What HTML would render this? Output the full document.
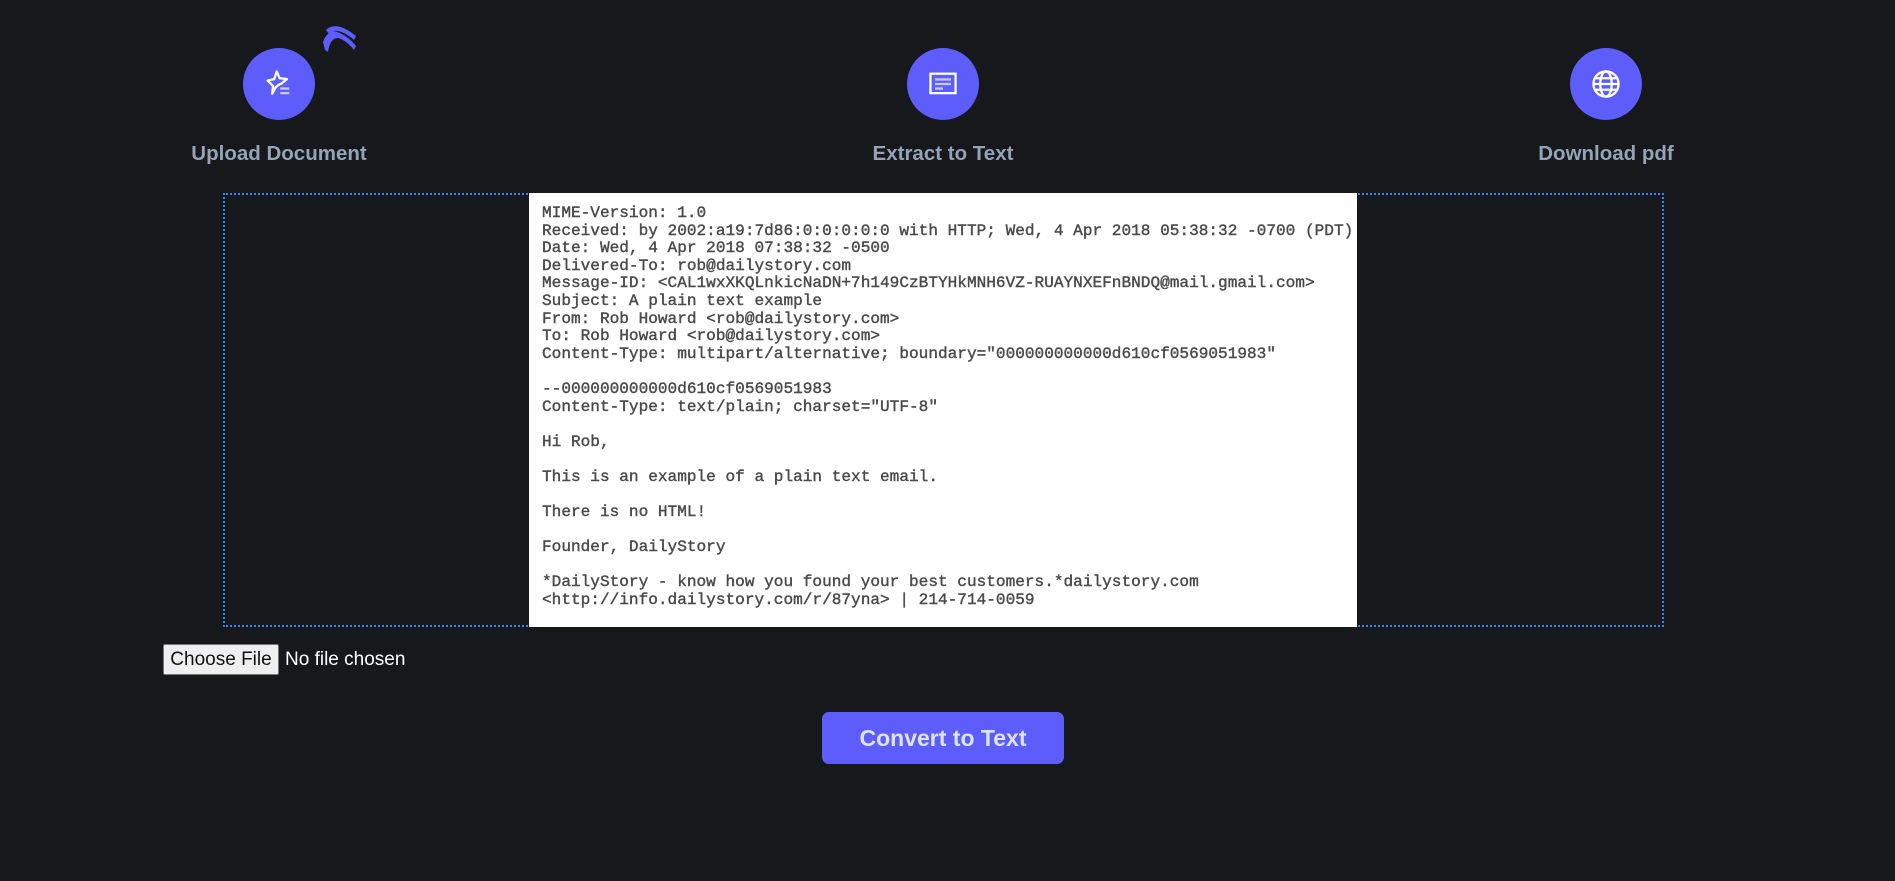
<!DOCTYPE html>
<html><head><meta charset="utf-8"><style>
html,body{margin:0;padding:0;background:#17181b;width:1895px;height:881px;overflow:hidden;font-family:"Liberation Sans",sans-serif}
.c{position:absolute;width:72px;height:72px;border-radius:50%;background:#5d5dfc;top:48px}
.c svg{position:absolute;left:20px;top:20px}
.l{position:absolute;top:142px;font-weight:bold;font-size:20.5px;color:#94a3b8;white-space:nowrap;transform:translateX(-50%)}
.box{position:absolute;left:223px;top:193px;width:1437px;height:430px;border:2px dotted #3b82f6}
.img{position:absolute;left:529px;top:193px;width:828px;height:434px;background:#fff}
pre{position:absolute;left:13px;top:12px;margin:0;font-family:"Liberation Mono",monospace;font-size:16.1px;line-height:17.6px;color:#4a4a4a;font-weight:normal;-webkit-text-stroke:0.4px #4a4a4a}
.cf{position:absolute;left:163px;top:644px;width:116px;height:31px;background:#efefef;border:1px solid #767676;border-radius:2px;box-sizing:border-box;font-size:19px;color:#111;text-align:center;line-height:29px}
.nf{position:absolute;left:285px;top:644px;line-height:31px;font-size:19px;color:#fff}
.btn{position:absolute;left:822px;top:712px;width:242px;height:52px;border-radius:7px;background:#5d5dfc;color:#dde4f4;font-weight:bold;font-size:23px;text-align:center;line-height:52px}
</style></head><body>
<svg style="position:absolute;left:318px;top:18px" width="44" height="42" viewBox="0 0 44 42"><path d="M8 12 Q18 2 38 18 L36 22 Q20 8 11 16 Z" fill="#5d5dfc"/><path d="M5 24 Q10 10 22 15 Q32 20 38 28 L36 32 Q28 22 20 20 Q12 20 10 34 L7 32 Z" fill="#5d5dfc"/></svg>
<div class="c" style="left:243px"><svg width="32" height="32" viewBox="0 0 28 28" fill="none" stroke="#fff" stroke-width="2" stroke-linejoin="round"><path d="M12 3 L14.6 9 L21 9.6 L16.3 13.6 L14 14.5 L11 17 L8 22.5 L8.8 15.7 L4 11 L9.8 9.7 Z"/><path d="M15 18 H23 M15 22 H23" stroke="#c7c9ff"/></svg></div>
<div class="c" style="left:907px"><svg width="32" height="32" viewBox="0 0 28 28" fill="none" stroke="#fff" stroke-width="2"><rect x="3" y="5" width="22" height="17"/><path d="M7 10 H21 M7 14 H21 M7 18 H14" stroke="#c7c9ff"/></svg></div>
<div class="c" style="left:1570px"><svg width="32" height="32" viewBox="0 0 28 28" fill="none" stroke="#fff" stroke-width="2"><circle cx="14" cy="14" r="11"/><ellipse cx="14" cy="14" rx="5" ry="11"/><path d="M3 14 H25 M5 9 H23 M5 19 H23"/></svg></div>
<div class="l" style="left:279px">Upload Document</div>
<div class="l" style="left:943px">Extract to Text</div>
<div class="l" style="left:1606px">Download pdf</div>
<div class="box"></div>
<div class="img"><pre>MIME-Version: 1.0
Received: by 2002:a19:7d86:0:0:0:0:0 with HTTP; Wed, 4 Apr 2018 05:38:32 -0700 (PDT)
Date: Wed, 4 Apr 2018 07:38:32 -0500
Delivered-To: rob@dailystory.com
Message-ID: &lt;CAL1wxXKQLnkicNaDN+7h149CzBTYHkMNH6VZ-RUAYNXEFnBNDQ@mail.gmail.com&gt;
Subject: A plain text example
From: Rob Howard &lt;rob@dailystory.com&gt;
To: Rob Howard &lt;rob@dailystory.com&gt;
Content-Type: multipart/alternative; boundary="000000000000d610cf0569051983"

--000000000000d610cf0569051983
Content-Type: text/plain; charset="UTF-8"

Hi Rob,

This is an example of a plain text email.

There is no HTML!

Founder, DailyStory

*DailyStory - know how you found your best customers.*dailystory.com
&lt;http://info.dailystory.com/r/87yna&gt; | 214-714-0059</pre></div>
<div class="cf">Choose File</div><div class="nf">No file chosen</div>
<div class="btn">Convert to Text</div>
</body></html>
